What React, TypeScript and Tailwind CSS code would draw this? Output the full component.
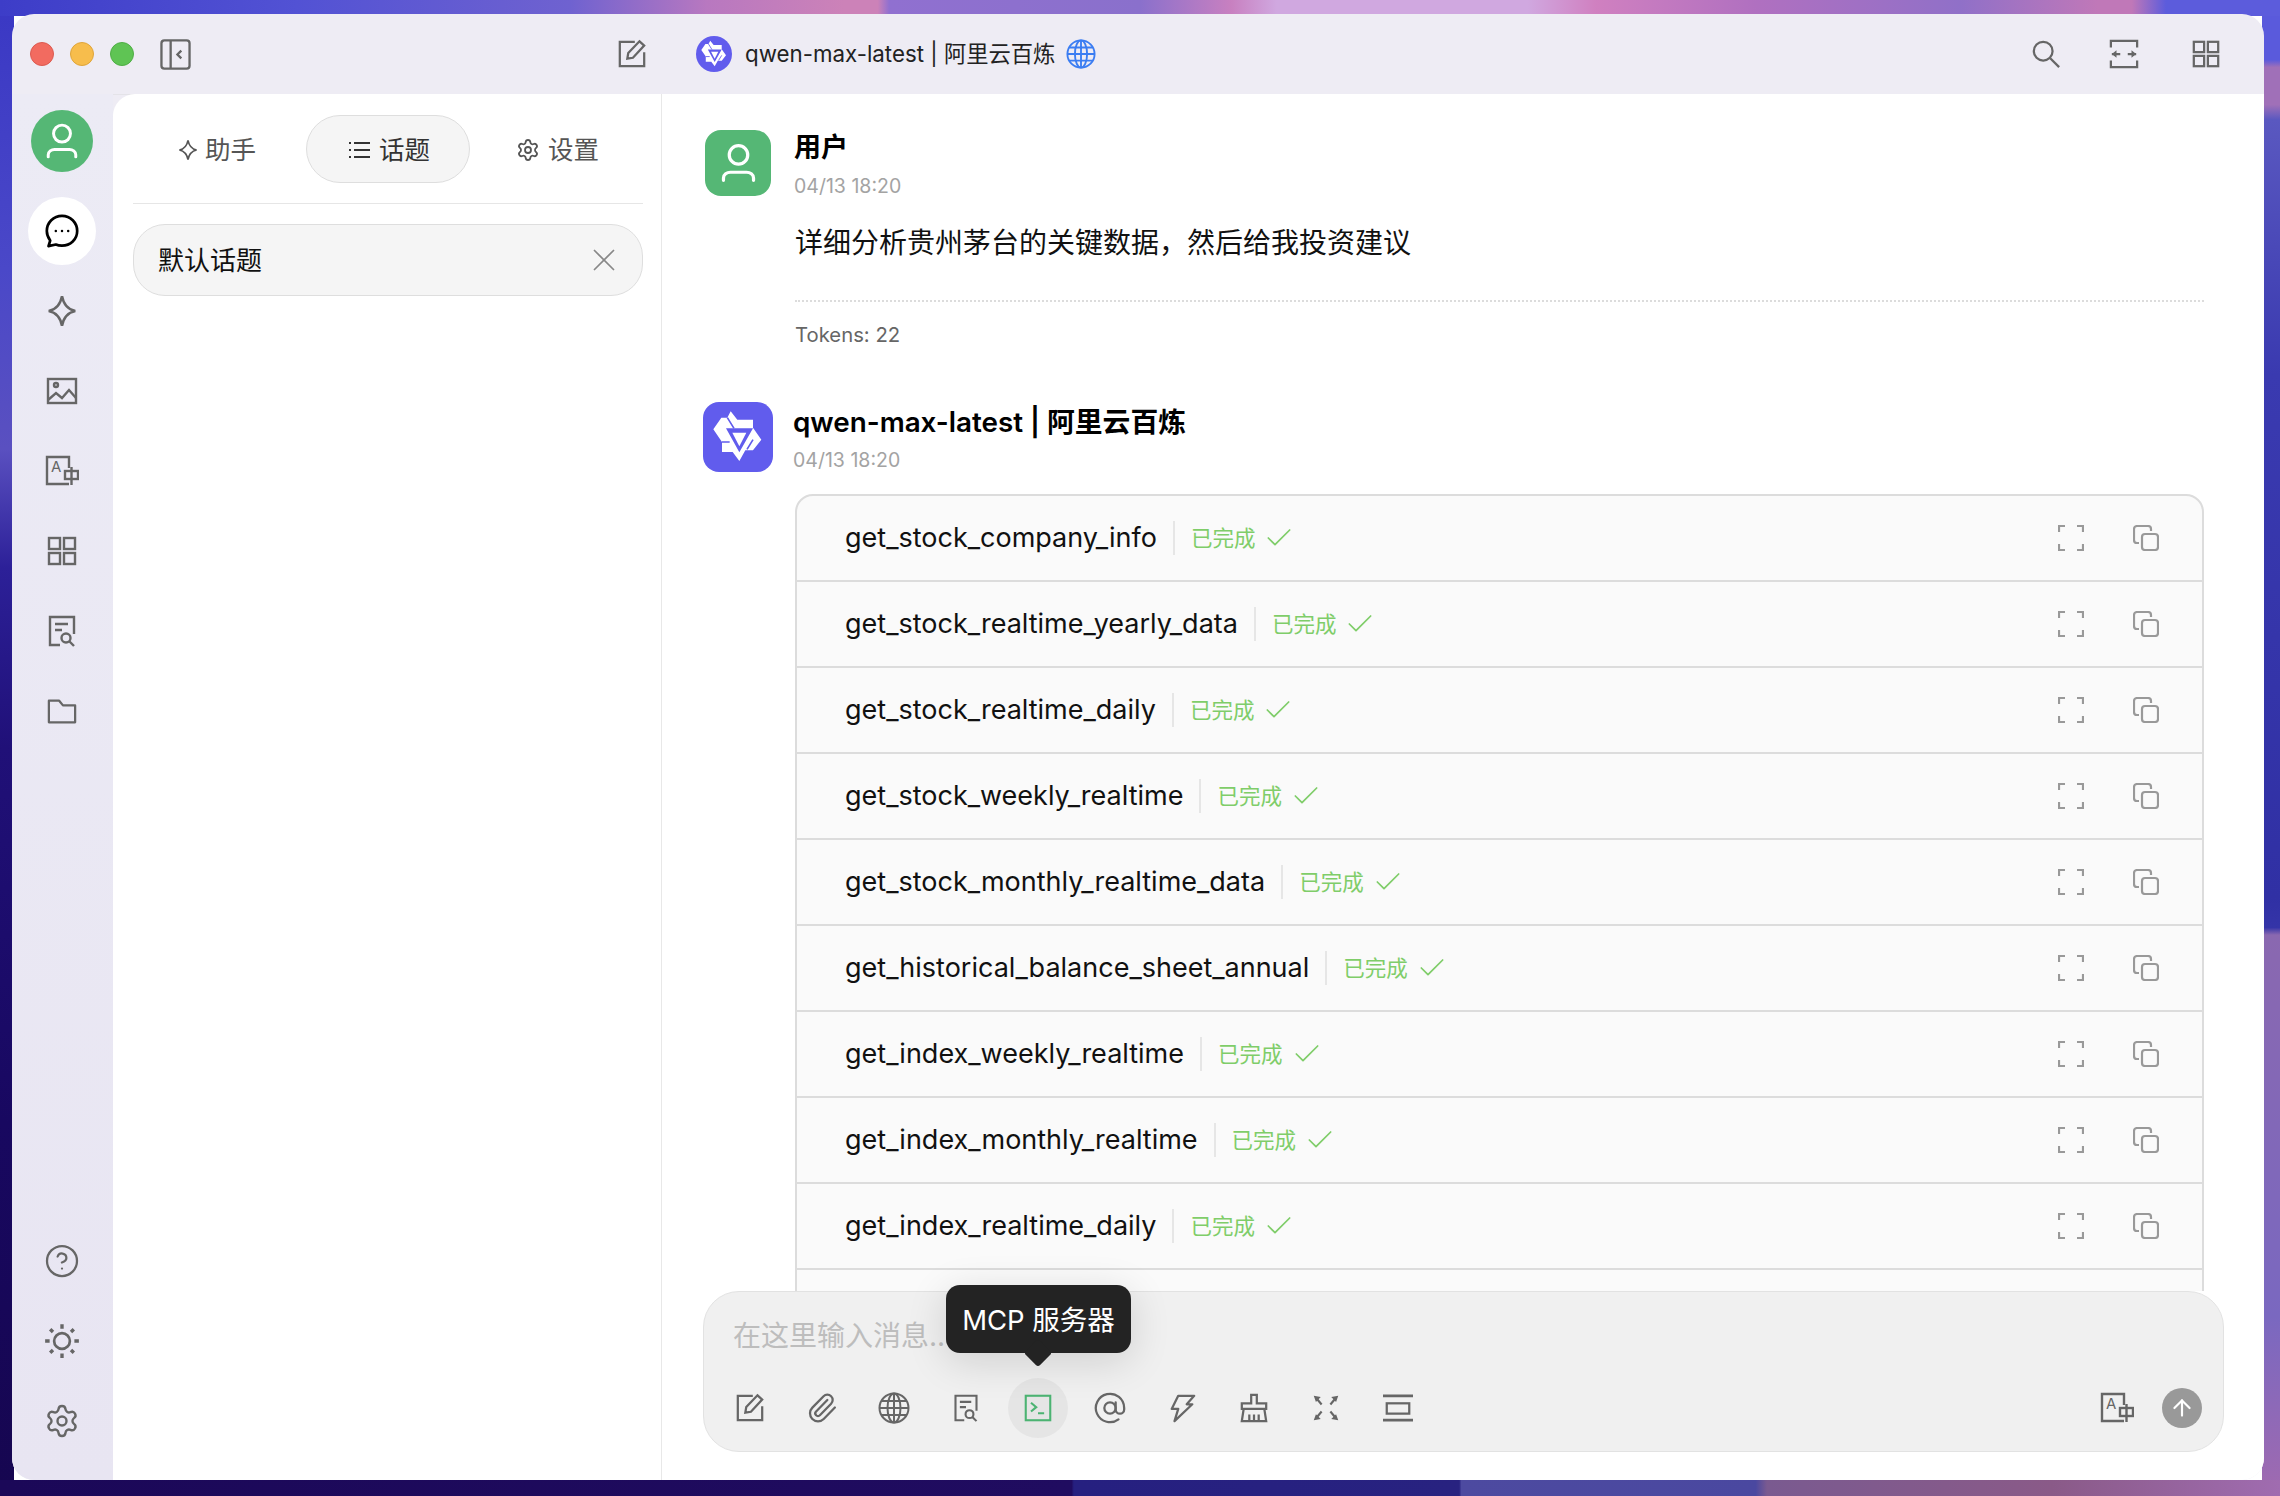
import React from "react";
import { AtSign, Check, ArrowUp, CircleHelp, Paperclip, Settings, X } from "lucide-react";

const tools = [
  "get_stock_company_info",
  "get_stock_realtime_yearly_data",
  "get_stock_realtime_daily",
  "get_stock_weekly_realtime",
  "get_stock_monthly_realtime_data",
  "get_historical_balance_sheet_annual",
  "get_index_weekly_realtime",
  "get_index_monthly_realtime",
  "get_index_realtime_daily",
];

type IconProps = { className?: string };

const Svg = ({ className, children }: IconProps & { children: React.ReactNode }) => (
  <svg viewBox="0 0 32 32" fill="none" stroke="currentColor" strokeWidth="2.4" className={className}>
    {children}
  </svg>
);

const PanelIcon = ({ className }: IconProps) => (
  <Svg className={className}>
    <rect x="1.5" y="1.5" width="29" height="29" rx="3" />
    <path d="M11 2v28M22 12l-4 4 4 4" />
  </Svg>
);

const EditIcon = ({ className }: IconProps) => (
  <Svg className={className}>
    <path d="M19 3H3v26h26V14" />
    <path d="M11 21l1-6L24 2.500l5 4.500-12 13z" />
  </Svg>
);

const SparkIcon = ({ className }: IconProps) => (
  <Svg className={className}>
    <path d="M16 2c1.500 8 5 12.500 12.500 14C21 17.500 17.500 22 16 30c-1.500-8-5-12.500-12.500-14C11 14.500 14.500 10 16 2z" />
  </Svg>
);

const ImageIcon = ({ className }: IconProps) => (
  <Svg className={className}>
    <rect x="2" y="4" width="28" height="24" />
    <circle cx="10" cy="10" r="2" />
    <path d="M2 25l8-7 6 5 7-8 7 8" />
  </Svg>
);

const TranslateIcon = ({ className }: IconProps) => (
  <svg viewBox="0 0 34 32" fill="none" stroke="currentColor" strokeWidth="2.4" className={className}>
    <path d="M24 13V2H2v27h22" />
    <text x="6" y="17" fontSize="15" fill="currentColor" stroke="none" fontFamily="Inter, sans-serif">A</text>
    <rect x="20" y="16" width="13" height="8" />
    <path d="M26.500 12v18" />
  </svg>
);

const GridIcon = ({ className }: IconProps) => (
  <Svg className={className}>
    <rect x="3" y="3" width="11" height="11" />
    <rect x="18" y="3" width="11" height="11" />
    <rect x="3" y="18" width="11" height="11" />
    <rect x="18" y="18" width="11" height="11" />
  </Svg>
);

const DocSearchIcon = ({ className }: IconProps) => (
  <Svg className={className}>
    <path d="M14 30H4V2h24v17" />
    <path d="M9 9h13M9 15h7" />
    <circle cx="20" cy="23" r="4.500" />
    <path d="M23.500 26.500L28 31" />
  </Svg>
);

const FolderIcon = ({ className }: IconProps) => (
  <Svg className={className}>
    <path d="M2 5h11l4 5h13v18H2z" strokeLinejoin="round" />
  </Svg>
);

const SunIcon = ({ className }: IconProps) => (
  <Svg className={className}>
    <circle cx="16" cy="16" r="7" />
    <path d="M16 1v4M16 27v4M1 16h4M27 16h4M5.500 5.500l2.500 2.500M24 24l2.500 2.500M26.500 5.500L24 8M8 24l-2.500 2.500" strokeWidth="3" />
  </Svg>
);

const ChatIcon = ({ className }: IconProps) => (
  <Svg className={className}>
    <path d="M16 2.500C8.500 2.500 2.500 8.500 2.500 16c0 3.500 1.200 6 3 8.500L4 29.500l6.500-1.500c1.800.8 3.500 1 5.500 1 7.500 0 13.500-5.500 13.500-13S23.500 2.500 16 2.500z" strokeLinejoin="round" />
    <circle cx="10.500" cy="16" r="1.100" fill="currentColor" stroke="none" />
    <circle cx="16" cy="16" r="1.100" fill="currentColor" stroke="none" />
    <circle cx="21.500" cy="16" r="1.100" fill="currentColor" stroke="none" />
  </Svg>
);

const SearchIcon = ({ className }: IconProps) => (
  <Svg className={className}>
    <circle cx="13" cy="13" r="10" />
    <path d="M20.500 20.500L30 30" />
  </Svg>
);

const NarrowIcon = ({ className }: IconProps) => (
  <Svg className={className}>
    <path d="M2 9V2h28v7M2 23v7h28v-7" />
    <path d="M3 16h9M20 16h9" />
    <path d="M8 12v8l-5-4zM24 12v8l5-4z" fill="currentColor" stroke="none" />
  </Svg>
);

const ExpandIcon = ({ className }: IconProps) => (
  <svg viewBox="0 0 26 26" fill="none" stroke="currentColor" strokeWidth="2.200" className={className}>
    <path d="M1 7V1h6M19 1h6v6M25 19v6h-6M7 25H1v-6" />
  </svg>
);

const CopyIcon = ({ className }: IconProps) => (
  <svg viewBox="0 0 26 26" fill="none" stroke="currentColor" strokeWidth="2.200" className={className}>
    <path d="M6 18H4a3 3 0 0 1-3-3V4a3 3 0 0 1 3-3h11a3 3 0 0 1 3 3v2" />
    <rect x="9" y="9" width="16" height="16" rx="3" />
  </svg>
);

const GlobeIcon = ({ className }: IconProps) => (
  <svg viewBox="0 0 32 32" fill="none" stroke="currentColor" strokeWidth="2" className={className}>
    <circle cx="16" cy="16" r="14.500" />
    <ellipse cx="16" cy="16" rx="6.500" ry="14.500" />
    <path d="M16 1.500v29M1.500 16h29M3.500 9h25M3.500 23h25" />
  </svg>
);

const TerminalIcon = ({ className }: IconProps) => (
  <Svg className={className}>
    <rect x="2" y="2" width="28" height="28" />
    <path d="M8 10l6 5-6 5M16 22h7" />
  </Svg>
);

const BoltIcon = ({ className }: IconProps) => (
  <Svg className={className}>
    <path d="M12 3h17l-8 9h6L8 30l4-13H5z" strokeLinejoin="round" />
  </Svg>
);

const BrushIcon = ({ className }: IconProps) => (
  <Svg className={className}>
    <path d="M13 2h6v9h10v6H3v-6h10zM5 17L3 30h26l-2-13M11 23v7M16 23v7M21 23v7" />
  </Svg>
);

const OutwardIcon = ({ className }: IconProps) => (
  <Svg className={className}>
    <path d="M11 12L6 6M21 12l5-6M11 20l-5 6M21 20l5 6" />
    <path d="M2 2l8 1.500-5.500 5.500zM30 2l-8 1.500 5.500 5.500zM2 30l8-1.500-5.500-5.500zM30 30l-8-1.500 5.500-5.500z" fill="currentColor" stroke="none" />
  </Svg>
);

const FoldIcon = ({ className }: IconProps) => (
  <Svg className={className}>
    <path d="M0 3h32M0 29h32" strokeWidth="3" />
    <rect x="4" y="11" width="24" height="11" />
  </Svg>
);

// ribbon star with a triangle in the middle
const QwenLogo = ({ className }: IconProps) => (
  <svg viewBox="15 15 210 210" className={className}>
    <path
      fill="white"
      fillRule="evenodd"
      d="M98 43L118 68H165V92L190 128L165 160H142L124 192L104 165H72V135L46 97L70 62H88ZM84 94H165L124 166Z"
    />
    <path fill="white" d="M103 107H145L124 148Z" />
    <path fill="none" stroke="#615ced" strokeWidth="5" d="M88 62L108 94M165 128L147 157M72 135H95" />
  </svg>
);

const UserIcon = ({ className }: IconProps) => (
  <svg viewBox="0 0 32 34" fill="none" stroke="white" strokeWidth="2.800" className={className}>
    <circle cx="16" cy="10" r="8" />
    <path d="M3 32v-2c0-3 3-5 6-5h14c3 0 6 2 6 5v2" strokeLinecap="round" />
  </svg>
);

const ToolButton = ({ children }: { children: React.ReactNode }) => (
  <div className="w-[72px] flex items-center justify-center text-[#666]">{children}</div>
);

const NavIcon = ({ children }: { children: React.ReactNode }) => (
  <div className="h-[80px] flex items-center justify-center text-[#666]">{children}</div>
);

export default function App() {
  return (
    <div
      className="w-[2280px] h-[1496px] pt-[14px] pl-[12px] pr-[16px] pb-[16px] bg-no-repeat [background-size:100%_16px,100%_16px,14px_100%,18px_100%] [background-position:top,bottom,left,right] bg-[linear-gradient(90deg,#3d3dc8_0%,#5252d4_13%,#6f62d0_25%,#b878c0_31%,#cc82b8_37%,#cc82b8_38.500%,#9070d0_39%,#8a70cc_50%,#c880c0_54%,#d0a8e0_56%,#d0a8e0_67%,#d080c0_70%,#b070c0_77%,#9070c8_86%,#c078b8_92%,#c078b8_93.500%,#5c5cdc_95%,#5c5cdc_100%),linear-gradient(90deg,#1b0858_0%,#200c60_47%,#262080_47.100%,#282280_64%,#4d4aa0_64.100%,#4a48a0_77%,#7a5a90_77.500%,#8a5a88_90%,#a06cb0_100%),linear-gradient(180deg,#3a38c4_0%,#4a48c8_18%,#5a50c0_30%,#2c2098_38%,#201078_50%,#180860_75%,#160650_100%),linear-gradient(180deg,#5a5adc_0%,#5a5adc_4%,#a070b8_4.500%,#a070b8_7%,#5a58c0_8%,#3a3ab0_25%,#3030a4_60%,#3434a8_62%,#8a68b0_62.500%,#7a68c0_88%,#a06ab0_100%)] font-['Inter','Noto_Sans_CJK_SC',sans-serif]"
    >
      <div className="relative w-full h-full rounded-[22px] overflow-hidden bg-[#eeecf4] flex flex-col">
        {/* Title bar */}
        <div className="h-[81px] shrink-0 flex items-center border-b border-[#e4e3e8]">
          <div className="flex items-center gap-[16px] pl-[18px]">
            <div className="w-[24px] h-[24px] rounded-full bg-[#f26b60] border border-[#dc5a50]" />
            <div className="w-[24px] h-[24px] rounded-full bg-[#f7bd4c] border border-[#dfa53a]" />
            <div className="w-[24px] h-[24px] rounded-full bg-[#5fc454] border border-[#4fae45]" />
          </div>
          <PanelIcon className="w-[31px] h-[31px] ml-[26px] text-[#666]" />
          <EditIcon className="w-[30px] h-[30px] ml-[426px] text-[#666]" />
          <div className="w-[36px] h-[36px] ml-[49px] rounded-full bg-[#615ced] flex items-center justify-center overflow-hidden">
            <QwenLogo className="w-[36px] h-[36px]" />
          </div>
          <span className="ml-[13px] text-[22.3px] text-[#222] whitespace-nowrap">qwen-max-latest | 阿里云百炼</span>
          <GlobeIcon className="w-[30px] h-[30px] ml-[11px] text-[#3b7df2]" />
          <div className="ml-auto flex items-center gap-[48px] pr-[43px] text-[#666]">
            <SearchIcon className="w-[30px] h-[30px]" />
            <NarrowIcon className="w-[30px] h-[30px]" />
            <GridIcon className="w-[30px] h-[30px] ml-[4px]" />
          </div>
        </div>

        <div className="flex-1 min-h-0 flex">
          {/* Icon rail */}
          <div className="w-[101px] shrink-0 flex flex-col items-center pr-[2px] bg-[linear-gradient(180deg,#ecebf5,#e8e5f2)] -mt-px">
            <div className="mt-[16px] w-[62px] h-[62px] rounded-full bg-[#55b775] flex items-center justify-center">
              <UserIcon className="w-[34px] h-[36px]" />
            </div>
            <div className="mt-[25px] w-[68px] h-[68px] rounded-full bg-white flex items-center justify-center text-black">
              <ChatIcon className="w-[36px] h-[36px]" />
            </div>
            <div className="mt-[6px]">
              <NavIcon><SparkIcon className="w-[34px] h-[34px]" /></NavIcon>
              <NavIcon><ImageIcon className="w-[32px] h-[32px]" /></NavIcon>
              <NavIcon><TranslateIcon className="w-[34px] h-[32px]" /></NavIcon>
              <NavIcon><GridIcon className="w-[32px] h-[32px]" /></NavIcon>
              <NavIcon><DocSearchIcon className="w-[32px] h-[34px]" /></NavIcon>
              <NavIcon><FolderIcon className="w-[32px] h-[30px]" /></NavIcon>
            </div>
            <div className="mt-auto mb-[19px]">
              <NavIcon><CircleHelp className="w-[36px] h-[36px]" strokeWidth={1.5} /></NavIcon>
              <NavIcon><SunIcon className="w-[36px] h-[36px]" /></NavIcon>
              <NavIcon><Settings className="w-[36px] h-[36px]" strokeWidth={1.6} /></NavIcon>
            </div>
          </div>

          {/* Topics panel */}
          <div className="w-[549px] shrink-0 bg-white rounded-tl-[22px] border-r border-[#e8e8e8] -mt-px pl-[20px] pr-[18px] pt-[21px]">
            <div className="flex items-center h-[68px]">
              <div className="w-[173px] h-[68px] pt-[2px] flex items-center justify-center gap-[6px] pr-[6px] text-[#555] text-[25.500px] whitespace-nowrap">
                <SparkIcon className="w-[22px] h-[22px]" />
                <span>助手</span>
              </div>
              <div className="w-[164px] h-[68px] pt-[2px] flex items-center justify-center gap-[9px] pl-[2px] rounded-[34px] bg-[#f5f5f5] border border-[#dedede] text-[#333] text-[25.500px] whitespace-nowrap">
                <svg viewBox="0 0 22 22" fill="none" stroke="currentColor" strokeWidth="2" className="w-[22px] h-[22px]">
                  <path d="M6 4h16M6 11h16M6 18h16M1 4h2M1 11h2M1 18h2" />
                </svg>
                <span>话题</span>
              </div>
              <div className="w-[173px] h-[68px] pt-[2px] pl-[2px] flex items-center justify-center gap-[8px] text-[#555] text-[25.500px] whitespace-nowrap">
                <Settings className="w-[24px] h-[24px]" strokeWidth={1.8} />
                <span>设置</span>
              </div>
            </div>
            <div className="mt-[20px] border-t border-[#e6e6e6]" />
            <div className="mt-[20px] h-[72px] rounded-[32px] bg-[#f5f5f5] border border-[#dedede] flex items-center justify-between pl-[24px] pr-[19px]">
              <span className="text-[26px] text-[#111]">默认话题</span>
              <X className="w-[38px] h-[38px] text-[#888]" strokeWidth={1.1} />
            </div>
          </div>

          {/* Conversation */}
          <div className="flex-1 min-w-0 bg-white flex flex-col -mt-px">
            <div className="flex-1 min-h-0 overflow-hidden pl-[41px] pr-[60px] pt-[36px]">
              <div className="flex items-start ml-[2px]">
                <div className="w-[66px] h-[66px] rounded-[16px] bg-[#55b775] flex items-center justify-center">
                  <UserIcon className="w-[37px] h-[40px]" />
                </div>
                <div className="ml-[23px]">
                  <div className="pt-[1px] text-[27px] leading-[34px] font-bold text-black">用户</div>
                  <div className="mt-[7px] text-[19.500px] leading-[28px] text-[#a3a3a3]">04/13 18:20</div>
                </div>
              </div>
              <div className="ml-[92px]">
                <div className="mt-[23px] text-[28px] leading-[40px] text-[#111]">详细分析贵州茅台的关键数据，然后给我投资建议</div>
                <div className="mt-[37px] border-t-2 border-dotted border-[#dcdcdc]" />
                <div className="mt-[19px] text-[20.300px] leading-[28px] text-[#666]">Tokens: 22</div>
              </div>
              <div className="mt-[53px] flex items-start">
                <div className="w-[70px] h-[70px] rounded-[16px] bg-[#615ced] overflow-hidden">
                  <QwenLogo className="w-[70px] h-[70px]" />
                </div>
                <div className="ml-[20px] pt-[3px]">
                  <div className="text-[27.800px] leading-[34px] font-semibold text-black whitespace-nowrap">qwen-max-latest | 阿里云百炼</div>
                  <div className="mt-[7px] text-[19.500px] leading-[28px] text-[#a3a3a3]">04/13 18:20</div>
                </div>
              </div>
              <div className="mt-[20px] ml-[92px] border-2 border-[#dcdcdc] rounded-t-[18px] bg-[#fafafa]">
                {tools.map((name) => (
                  <div key={name} className="h-[86px] flex items-center border-b-2 border-[#dcdcdc] pl-[48px] pr-[43px]">
                    <span className="text-[27px] text-[#111] whitespace-nowrap">{name}</span>
                    <div className="w-[2px] h-[34px] bg-[#e6e6e6] ml-[16px]" />
                    <span className="ml-[16px] text-[21.500px] text-[#7fcd69]">已完成</span>
                    <Check className="w-[32px] h-[32px] ml-[8px] text-[#7fcd69]" strokeWidth={1.3} />
                    <ExpandIcon className="ml-auto w-[26px] h-[26px] text-[#999]" />
                    <CopyIcon className="ml-[49px] w-[26px] h-[26px] text-[#999]" />
                  </div>
                ))}
                <div className="h-[60px]" />
              </div>
            </div>

            {/* Input box */}
            <div className="relative shrink-0 h-[161px] ml-[41px] mr-[40px] mb-[28px] rounded-[36px] bg-[#f0f0f0] border-[1.500px] border-[#e2e2e2] flex flex-col">
              <div className="pl-[29px] pt-[24px] text-[28px] leading-[40px] text-[#bdbdbd]">在这里输入消息...</div>
              <div className="mt-auto mb-[13px] flex items-center h-[60px] pl-[10px] pr-[21px]">
                <ToolButton><EditIcon className="w-[30px] h-[30px]" /></ToolButton>
                <ToolButton><Paperclip className="w-[32px] h-[32px]" strokeWidth={1.7} /></ToolButton>
                <ToolButton><GlobeIcon className="w-[32px] h-[32px]" /></ToolButton>
                <ToolButton><DocSearchIcon className="w-[28px] h-[32px]" /></ToolButton>
                <div className="w-[72px] flex items-center justify-center">
                  <div className="w-[60px] h-[60px] rounded-full bg-[#e5e5e5] flex items-center justify-center text-[#4cb372]">
                    <TerminalIcon className="w-[28px] h-[28px]" />
                  </div>
                </div>
                <ToolButton><AtSign className="w-[34px] h-[34px]" strokeWidth={1.6} /></ToolButton>
                <ToolButton><BoltIcon className="w-[30px] h-[32px]" /></ToolButton>
                <ToolButton><BrushIcon className="w-[30px] h-[30px]" /></ToolButton>
                <ToolButton><OutwardIcon className="w-[28px] h-[28px]" /></ToolButton>
                <ToolButton><FoldIcon className="w-[32px] h-[30px]" /></ToolButton>
                <div className="ml-auto flex items-center gap-[28px] text-[#666]">
                  <TranslateIcon className="w-[34px] h-[32px]" />
                  <div className="w-[40px] h-[40px] rounded-full bg-[#999] flex items-center justify-center">
                    <ArrowUp className="w-[26px] h-[26px] text-white" strokeWidth={2} />
                  </div>
                </div>
              </div>

              {/* Tooltip */}
              <div className="absolute left-[242px] top-[-7px] w-[185px] h-[68px] pt-[3px] rounded-[14px] bg-[#232323] flex items-center justify-center text-[27.500px] text-white whitespace-nowrap shadow-[0_8px_40px_rgba(0,0,0,0.14)]">
                MCP 服务器
                <div className="absolute left-[82px] bottom-[-10px] w-[20px] h-[20px] rotate-45 rounded-[3px] bg-[#232323]" />
              </div>
            </div>
          </div>
        </div>
      </div>
    </div>
  );
}
